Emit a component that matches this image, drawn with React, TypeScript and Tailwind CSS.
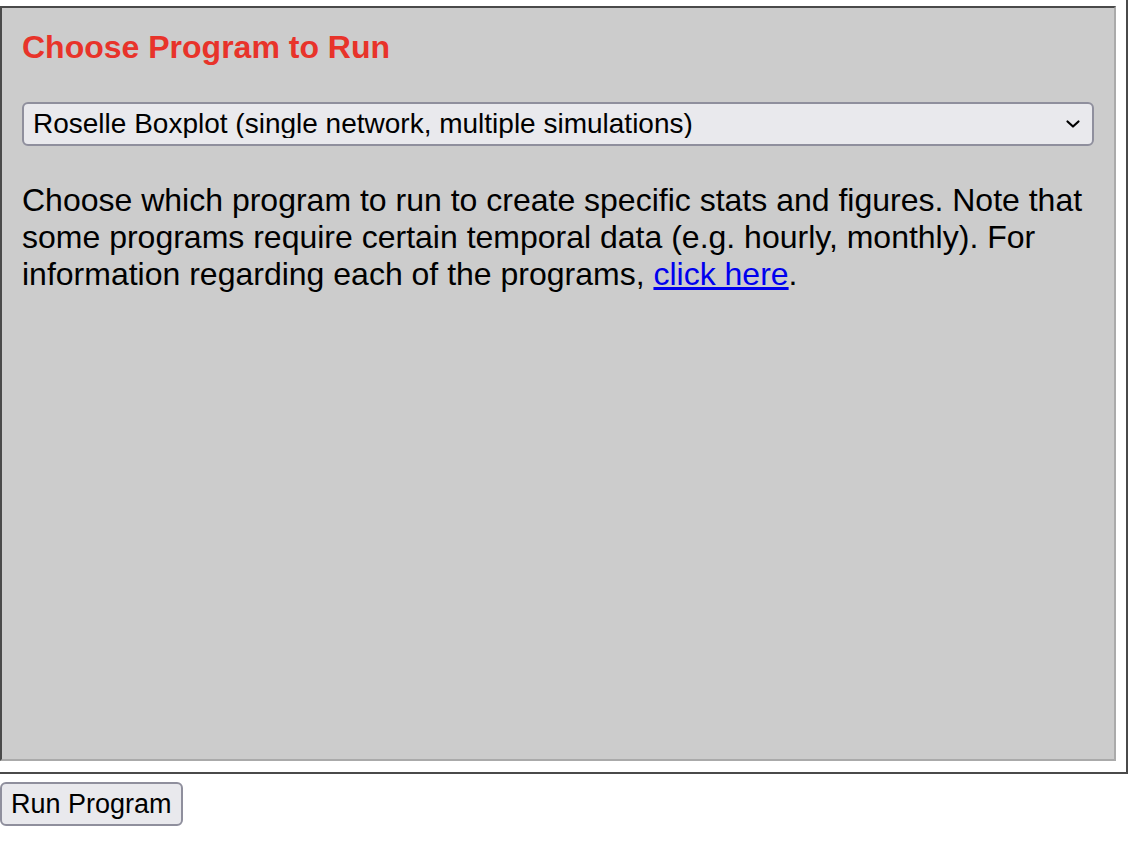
import { useState } from 'react';

const programs = [
  'Roselle Boxplot (single network, multiple simulations)',
  'Roselle Boxplot (multiple networks)',
  'Hourly Stats',
  'Monthly Stats',
];

export default function App() {
  const [program, setProgram] = useState(programs[0]);

  return (
    <div className="w-[1128px] bg-white font-['Liberation_Sans',Arial,sans-serif] text-black">
      {/* Panel wrapper */}
      <div className="border-r-2 border-b-2 border-[#4a4a4a] pt-[6px] pr-[10px] pb-[11px]">
        <div className="h-[755px] border-2 border-t-[#4a4a4a] border-l-[#4a4a4a] border-r-[#aaaaaa] border-b-[#aaaaaa] bg-[#cccccc] px-[20px]">
          <h2 className="mt-[21px] text-[32px] font-bold leading-[36px] text-[#e8332a]">
            Choose Program to Run
          </h2>

          <div className="relative mt-[37px]">
            <select
              value={program}
              onChange={(e) => setProgram(e.target.value)}
              className="h-[44px] w-full appearance-none rounded-[6px] border-2 border-[#8f8f9d] bg-[#e9e9ed] pl-[9px] text-[28px] leading-none text-black outline-none"
            >
              {programs.map((p) => (
                <option key={p} value={p}>
                  {p}
                </option>
              ))}
            </select>
            <svg
              className="pointer-events-none absolute right-[13px] top-[17px]"
              width="16"
              height="10"
              viewBox="0 0 16 10"
              fill="none"
            >
              <path d="M2.5 2.5 L8 7.5 L13.5 2.5" stroke="#000" strokeWidth="2.2" strokeLinecap="round" strokeLinejoin="round" />
            </svg>
          </div>

          <p className="mt-[36px] text-[32px] leading-[37px]">
            Choose which program to run to create specific stats and figures. Note that some programs
            require certain temporal data (e.g. hourly, monthly). For information regarding each of the
            programs,{' '}
            <a href="#" className="text-[#0000ee] underline">
              click here
            </a>
            .
          </p>
        </div>
      </div>

      <button className="mt-[8px] h-[44px] rounded-[6px] border-2 border-[#8f8f9d] bg-[#e9e9ed] px-[9px] text-[27px] leading-none text-black">
        Run Program
      </button>
    </div>
  );
}
